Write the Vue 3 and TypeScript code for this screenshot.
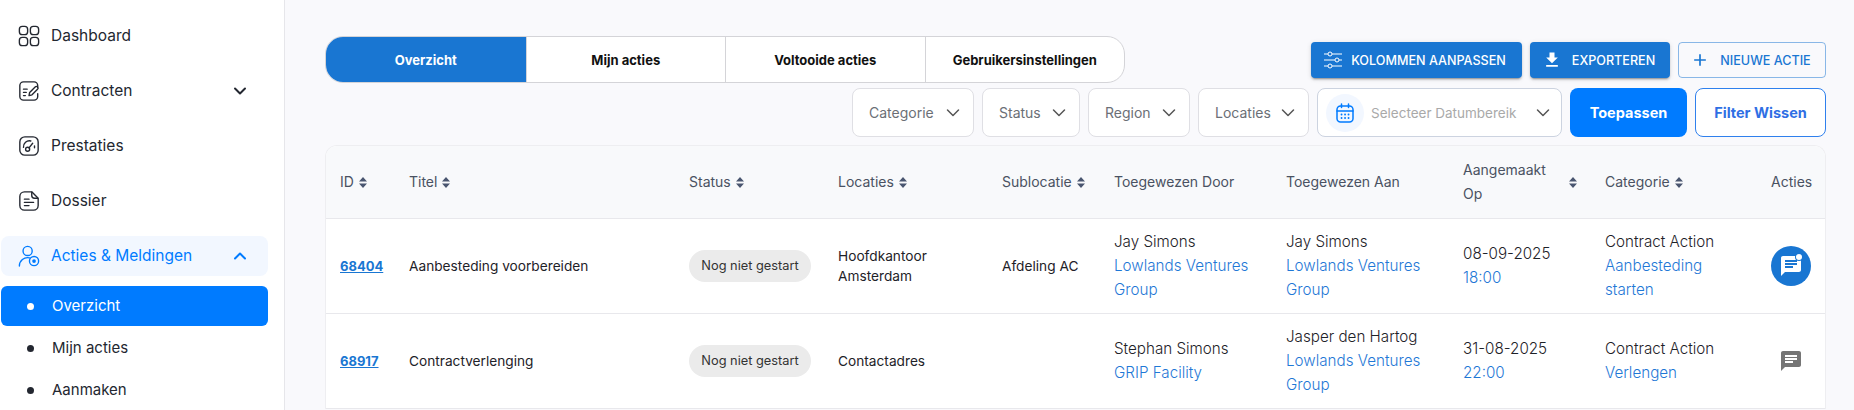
<template>
  <div class="page">
    <aside class="sidebar">
      <nav class="nav">
        <a class="nav__item">
          <svg class="nav__icon" viewBox="0 0 24 24" fill="none" stroke="currentColor" stroke-width="1.5">
            <rect x="1.5" y="1.5" width="9" height="9" rx="3.2" />
            <rect x="13.5" y="1.5" width="9" height="9" rx="3.2" />
            <rect x="1.5" y="13.5" width="9" height="9" rx="3.2" />
            <rect x="13.5" y="13.5" width="9" height="9" rx="3.2" />
          </svg>
          <span>Dashboard</span>
        </a>
        <a class="nav__item">
          <svg class="nav__icon" viewBox="0 0 24 24" fill="none" stroke="currentColor" stroke-width="1.5" stroke-linecap="round" stroke-linejoin="round">
            <path d="M21.5 8V6a4 4 0 0 0-4-4H6a4 4 0 0 0-4 4v12a4 4 0 0 0 4 4h11.5a4 4 0 0 0 4-4v-3" />
            <path d="M6 10h4M6 13.5h3M6 17h2" />
            <path d="M12 17l.7-3.4 6-6a1.8 1.8 0 0 1 2.6 2.6l-6 6z" />
          </svg>
          <span>Contracten</span>
          <svg class="nav__chevron" viewBox="0 0 14 14" fill="none" stroke="currentColor" stroke-width="2" stroke-linecap="round" stroke-linejoin="round">
            <path d="M2 4.5l5 5 5-5" />
          </svg>
        </a>
        <a class="nav__item">
          <svg class="nav__icon" viewBox="0 0 24 24" fill="none" stroke="currentColor" stroke-width="1.5" stroke-linecap="round">
            <rect x="2" y="2" width="20" height="20" rx="5.5" />
            <path d="M6 13.5a6.500 6.500 0 0 1 8-7" />
            <circle cx="10.500" cy="15.500" r="2.200" />
            <path d="M12 14l4-5M18 12v2" />
          </svg>
          <span>Prestaties</span>
        </a>
        <a class="nav__item">
          <svg class="nav__icon" viewBox="0 0 24 24" fill="none" stroke="currentColor" stroke-width="1.5" stroke-linecap="round" stroke-linejoin="round">
            <path d="M15 2H7a5 5 0 0 0-5 5v10a5 5 0 0 0 5 5h10a5 5 0 0 0 5-5V9z" />
            <path d="M15 2.500V6a3 3 0 0 0 3 3h3.500" />
            <path d="M7 10h5M7 13.500h10M7 17h5" />
          </svg>
          <span>Dossier</span>
        </a>
        <a class="nav__item nav__item--open">
          <svg class="nav__icon" viewBox="0 0 24 24" fill="none" stroke="currentColor" stroke-width="1.5" stroke-linecap="round">
            <circle cx="10.500" cy="6.500" r="5" />
            <path d="M1.500 23a9 9 0 0 1 11-9" />
            <circle cx="17.500" cy="17.500" r="5" />
            <circle cx="17.500" cy="17.500" r="2" fill="currentColor" stroke="none" />
          </svg>
          <span>Acties &amp; Meldingen</span>
          <svg class="nav__chevron" viewBox="0 0 14 14" fill="none" stroke="currentColor" stroke-width="2" stroke-linecap="round" stroke-linejoin="round">
            <path d="M2 9.500l5-5 5 5" />
          </svg>
        </a>
      </nav>
      <div class="subnav">
        <a
          v-for="(item, i) in subItems"
          :key="item"
          class="subnav__item"
          :class="{ 'subnav__item--active': i === 0 }"
        >
          <i class="subnav__dot"></i>
          <span>{{ item }}</span>
        </a>
      </div>
    </aside>

    <main class="main">
      <div class="toolbar">
        <div class="tabs">
          <button
            v-for="(tab, i) in tabs"
            :key="tab"
            class="tabs__tab"
            :class="{ 'tabs__tab--active': i === 0 }"
          >
            {{ tab }}
          </button>
        </div>
        <div class="actions">
          <button class="btn btn--solid btn--columns">
            <svg class="btn__sliders" viewBox="0 0 18 18" fill="none" stroke="currentColor" stroke-width="1">
              <path d="M0 3h4M8 3h10M0 9h11M15 9h3M0 15h4M8 15h10" />
              <circle cx="6" cy="3" r="2" />
              <circle cx="13" cy="9" r="2" />
              <circle cx="6" cy="15" r="2" />
            </svg>
            KOLOMMEN AANPASSEN
          </button>
          <button class="btn btn--solid btn--export">
            <svg class="btn__icon" viewBox="0 0 24 24" fill="currentColor">
              <path d="M19 9h-4V3H9v6H5l7 7 7-7zM5 18v2h14v-2H5z" />
            </svg>
            EXPORTEREN
          </button>
          <button class="btn btn--outline btn--new">
            <svg class="btn__icon" viewBox="0 0 24 24" fill="currentColor">
              <path d="M19 13h-6v6h-2v-6H5v-2h6V5h2v6h6v2z" />
            </svg>
            NIEUWE ACTIE
          </button>
        </div>
      </div>

      <div class="filters">
        <div v-for="f in filters" :key="f.label" class="select" :class="f.cls">
          <span>{{ f.label }}</span>
          <svg class="select__chevron" viewBox="0 0 14 14" fill="none" stroke="currentColor" stroke-width="1.500" stroke-linecap="round" stroke-linejoin="round">
            <path d="M1.500 4l5.500 5.500L12.500 4" />
          </svg>
        </div>
        <div class="select select--date">
          <span class="select__cal">
            <svg viewBox="0 0 18 20" width="18" height="20" fill="none" stroke="#007bff" stroke-width="1.500" stroke-linecap="round">
              <rect x="1" y="3" width="16" height="16" rx="3.500" />
              <path d="M1 8h16M5.500 1v3.500M12.500 1v3.500" />
              <path d="M5.500 11.500h.1M9 11.500h.1M12.500 11.500h.1M5.500 15h.1M9 15h.1M12.500 15h.1" stroke-width="1.800" />
            </svg>
          </span>
          <span class="select__placeholder">Selecteer Datumbereik</span>
          <svg class="select__chevron" viewBox="0 0 14 14" fill="none" stroke="currentColor" stroke-width="1.500" stroke-linecap="round" stroke-linejoin="round">
            <path d="M1.500 4l5.500 5.500L12.500 4" />
          </svg>
        </div>
        <button class="apply">Toepassen</button>
        <button class="clear">Filter Wissen</button>
      </div>

      <div class="card">
        <table class="table">
          <colgroup>
            <col v-for="c in columns" :key="c.label" :class="c.cls" />
          </colgroup>
          <thead>
            <tr>
              <th v-for="c in columns" :key="c.label">
                <div class="th" :class="{ 'th--spread': c.spread }">
                  <span>{{ c.label }}</span>
                  <svg v-if="c.sortable" class="sort" viewBox="0 0 8 11" fill="#4a5670">
                    <path d="M4 0l4 4.500H0zM4 11L0 6.500h8z" />
                  </svg>
                </div>
              </th>
            </tr>
          </thead>
          <tbody>
            <tr v-for="row in rows" :key="row.id">
              <td><a class="id">{{ row.id }}</a></td>
              <td>{{ row.title }}</td>
              <td><span class="badge">{{ row.status }}</span></td>
              <td>
                <div class="location">{{ row.location }}</div>
              </td>
              <td>{{ row.sublocation }}</td>
              <td class="stack">
                <div>{{ row.byName }}</div>
                <div class="link">{{ row.byOrg }}</div>
              </td>
              <td class="stack">
                <div>{{ row.toName }}</div>
                <div class="link">{{ row.toOrg }}</div>
              </td>
              <td class="stack">
                <div>{{ row.date }}</div>
                <div class="link">{{ row.time }}</div>
              </td>
              <td class="stack">
                <div>{{ row.category }}</div>
                <div class="link">{{ row.subcategory }}</div>
              </td>
              <td>
                <span class="chat" :class="{ 'chat--new': row.unread }">
                  <svg viewBox="0 0 24 24" width="24" height="24" fill="currentColor">
                    <path d="M20 2H4c-1.100 0-1.990.9-1.990 2L2 22l4-4h14c1.100 0 2-.9 2-2V4c0-1.100-.9-2-2-2zM6 9h12v2H6V9zm8 5H6v-2h8v2zm4-6H6V6h12v2z" />
                  </svg>
                  <i v-if="row.unread" class="chat__dot"></i>
                </span>
              </td>
            </tr>
          </tbody>
        </table>
      </div>
    </main>
  </div>
</template>

<script setup lang="ts">
interface Row {
  id: number;
  title: string;
  status: string;
  location: string;
  sublocation: string;
  byName: string;
  byOrg: string;
  toName: string;
  toOrg: string;
  date: string;
  time: string;
  category: string;
  subcategory: string;
  unread: boolean;
}

const subItems = ["Overzicht", "Mijn acties", "Aanmaken"];

const tabs = ["Overzicht", "Mijn acties", "Voltooide acties", "Gebruikersinstellingen"];

const filters = [
  { label: "Categorie", cls: "select--category" },
  { label: "Status", cls: "select--status" },
  { label: "Region", cls: "select--region" },
  { label: "Locaties", cls: "select--locations" },
];

const columns = [
  { label: "ID", cls: "col-id", sortable: true, spread: false },
  { label: "Titel", cls: "col-title", sortable: true, spread: false },
  { label: "Status", cls: "col-status", sortable: true, spread: false },
  { label: "Locaties", cls: "col-location", sortable: true, spread: false },
  { label: "Sublocatie", cls: "col-sub", sortable: true, spread: false },
  { label: "Toegewezen Door", cls: "col-by", sortable: false, spread: false },
  { label: "Toegewezen Aan", cls: "col-to", sortable: false, spread: false },
  { label: "Aangemaakt Op", cls: "col-date", sortable: true, spread: true },
  { label: "Categorie", cls: "col-cat", sortable: true, spread: false },
  { label: "Acties", cls: "col-act", sortable: false, spread: false },
];

const rows: Row[] = [
  {
    id: 68404,
    title: "Aanbesteding voorbereiden",
    status: "Nog niet gestart",
    location: "Hoofdkantoor Amsterdam",
    sublocation: "Afdeling AC",
    byName: "Jay Simons",
    byOrg: "Lowlands Ventures Group",
    toName: "Jay Simons",
    toOrg: "Lowlands Ventures Group",
    date: "08-09-2025",
    time: "18:00",
    category: "Contract Action",
    subcategory: "Aanbesteding starten",
    unread: true,
  },
  {
    id: 68917,
    title: "Contractverlenging",
    status: "Nog niet gestart",
    location: "Contactadres",
    sublocation: "",
    byName: "Stephan Simons",
    byOrg: "GRIP Facility",
    toName: "Jasper den Hartog",
    toOrg: "Lowlands Ventures Group",
    date: "31-08-2025",
    time: "22:00",
    category: "Contract Action",
    subcategory: "Verlengen",
    unread: false,
  },
];
</script>

<style>
html,
body {
  margin: 0;
  height: 100%;
  overflow: hidden;
  background: #f9f9fc;
}
</style>

<style scoped>
.page {
  display: flex;
  height: 410px;
  overflow: hidden;
  font-family: "Inter", "Liberation Sans", sans-serif;
  color: #1e2228;
}

.sidebar {
  flex: 0 0 283px;
  box-sizing: content-box;
  background: #fff;
  border-right: 1px solid #e6e6ea;
  padding: 16px 0 0 1px;
}

.nav {
  display: flex;
  flex-direction: column;
  gap: 15px;
  width: 267px;
}

.nav__item {
  display: flex;
  align-items: center;
  height: 40px;
  padding: 0 21px 0 18px;
  font-size: 15.500px;
  border-radius: 8px;
  box-sizing: border-box;
  color: #232730;
  margin-left: -1px;
}

.nav__item span {
  margin-top: -2px;
}

.nav__icon {
  width: 22px;
  height: 22px;
  margin-right: 11px;
  flex: none;
}

.nav__chevron {
  width: 14px;
  height: 14px;
  margin-left: auto;
}

.nav__item--open {
  background: #f2f7ff;
  color: #007bff;
  margin-left: 0;
  padding-left: 17px;
}

.subnav {
  display: flex;
  flex-direction: column;
  width: 267px;
  margin-top: 10px;
  gap: 2px;
}

.subnav__item {
  display: flex;
  align-items: center;
  height: 40px;
  border-radius: 6px;
  padding-left: 26px;
  font-size: 15px;
  color: #232730;
}

.subnav__item span {
  margin-top: -2px;
}

.subnav__item--active {
  background: #007bff;
  color: #fff;
}

.subnav__dot {
  width: 7px;
  height: 7px;
  border-radius: 50%;
  background: currentColor;
  margin-right: 18px;
}

.main {
  flex: 1;
  min-width: 0;
  padding: 36px 28px 0 40px;
}

.toolbar {
  display: flex;
  align-items: center;
  justify-content: space-between;
}

.tabs {
  display: flex;
  height: 47px;
  box-sizing: border-box;
  border: 1.500px solid #d4d4d8;
  border-radius: 18px;
  background: #fff;
  overflow: hidden;
}

.tabs__tab {
  width: 199.500px;
  border: 0;
  border-left: 1.500px solid #d4d4d8;
  background: transparent;
  font: 700 13px "Inter", "Liberation Sans", sans-serif;
  color: #111;
  padding: 0;
}

.tabs__tab:first-child {
  border-left: 0;
}

.tabs__tab--active {
  background: #1976d2;
  color: #fff;
}

.actions {
  display: flex;
  gap: 8px;
  margin-top: 1px;
}

.btn {
  display: flex;
  align-items: center;
  justify-content: center;
  height: 36px;
  box-sizing: border-box;
  border-radius: 4px;
  font: 500 12.600px "Inter", "Liberation Sans", sans-serif;
  padding: 0 3px 0 0;
}

.btn--solid {
  background: #1976d2;
  color: #fff;
  border: 0;
  box-shadow: 0 3px 1px -2px rgba(0, 0, 0, 0.2), 0 2px 2px rgba(0, 0, 0, 0.14), 0 1px 5px rgba(0, 0, 0, 0.12);
}

.btn--outline {
  background: transparent;
  color: #1976d2;
  border: 1px solid rgba(25, 118, 210, 0.5);
}

.btn--columns {
  width: 211px;
  gap: 9px;
}

.btn--export {
  width: 140px;
  gap: 10px;
}

.btn--new {
  width: 148px;
  gap: 10px;
}

.btn__sliders {
  width: 18px;
  height: 18px;
}

.btn__icon {
  width: 20px;
  height: 20px;
}

.filters {
  display: flex;
  justify-content: flex-end;
  gap: 8px;
  margin-top: 5px;
}

.select {
  display: flex;
  align-items: center;
  justify-content: space-between;
  height: 49px;
  box-sizing: border-box;
  padding: 0 13px 0 16px;
  background: #fff;
  border: 1px solid #dfdfe4;
  border-radius: 8px;
  font-size: 14px;
  color: #6b6f76;
}

.select--category {
  width: 122px;
}

.select--status {
  width: 98px;
}

.select--region {
  width: 102px;
}

.select--locations {
  width: 111px;
}

.select--date {
  width: 245px;
  padding: 0 11px 0 8px;
  border-color: #ccd3e0;
  font-size: 13.500px;
}

.select__chevron {
  width: 14px;
  height: 14px;
  color: #555;
  flex: none;
}

.select__cal {
  display: flex;
  align-items: center;
  justify-content: center;
  width: 38px;
  height: 38px;
  border-radius: 50%;
  background: #f2f7ff;
  flex: none;
}

.select__placeholder {
  flex: 1;
  margin-left: 7px;
  color: #a9a9a9;
  white-space: nowrap;
}

.apply,
.clear {
  height: 49px;
  box-sizing: border-box;
  border-radius: 8px;
  font: 700 14.500px "Inter", "Liberation Sans", sans-serif;
  padding: 0;
}

.apply {
  width: 117px;
  background: #007bff;
  color: #fff;
  border: 0;
}

.clear {
  width: 131px;
  background: #fff;
  color: #2f6fe4;
  border: 1px solid #2f80ed;
}

.card {
  margin-top: 8px;
  border: 1px solid #eeeef1;
  border-bottom: 0;
  border-radius: 12px 12px 0 0;
  background: #fff;
  overflow: hidden;
}

.table {
  width: 100%;
  table-layout: fixed;
  border-collapse: collapse;
  font-size: 13.700px;
}

.col-id {
  width: 69px;
}

.col-title {
  width: 280px;
}

.col-status {
  width: 149px;
}

.col-location {
  width: 164px;
}

.col-sub {
  width: 112px;
}

.col-by {
  width: 172px;
}

.col-to {
  width: 177px;
}

.col-date {
  width: 142px;
}

.col-cat {
  width: 166px;
}

th {
  height: 72px;
  padding: 0 14px;
  background: #f8f9fb;
  border-bottom: 1px solid #e8e8ec;
  font-weight: 400;
  font-size: 14px;
  line-height: 24px;
  color: #4a5262;
  text-align: left;
}

.th {
  display: flex;
  align-items: center;
  gap: 5px;
}

.th--spread {
  justify-content: space-between;
}

.th--spread span {
  width: 90px;
}

.sort {
  width: 8px;
  height: 11px;
  flex: none;
}

td {
  height: 94px;
  padding: 0 14px;
  border-bottom: 1px solid #e8e8ec;
  color: #1e2228;
  line-height: 20px;
}

.stack {
  font-size: 15.200px;
  font-weight: 350;
  line-height: 24px;
}

.link {
  color: #1f78d6;
}

.id {
  font-weight: 700;
  font-size: 13px;
  color: #1976d2;
  text-decoration: underline;
}

.badge {
  display: inline-flex;
  align-items: center;
  justify-content: center;
  width: 122px;
  height: 32px;
  border-radius: 16px;
  background: #ebebeb;
  font-size: 12.800px;
  white-space: nowrap;
  color: #333;
}

.location {
  max-width: 125px;
}

.chat {
  position: relative;
  display: flex;
  align-items: center;
  justify-content: center;
  width: 40px;
  height: 40px;
  border-radius: 50%;
  color: #757575;
}

.chat--new {
  background: #1976d2;
  color: #fff;
}

.chat__dot {
  position: absolute;
  top: 8px;
  right: 9px;
  width: 6px;
  height: 6px;
  border-radius: 50%;
  background: #fff;
  box-shadow: 0 0 0 1px #1976d2;
}
</style>
